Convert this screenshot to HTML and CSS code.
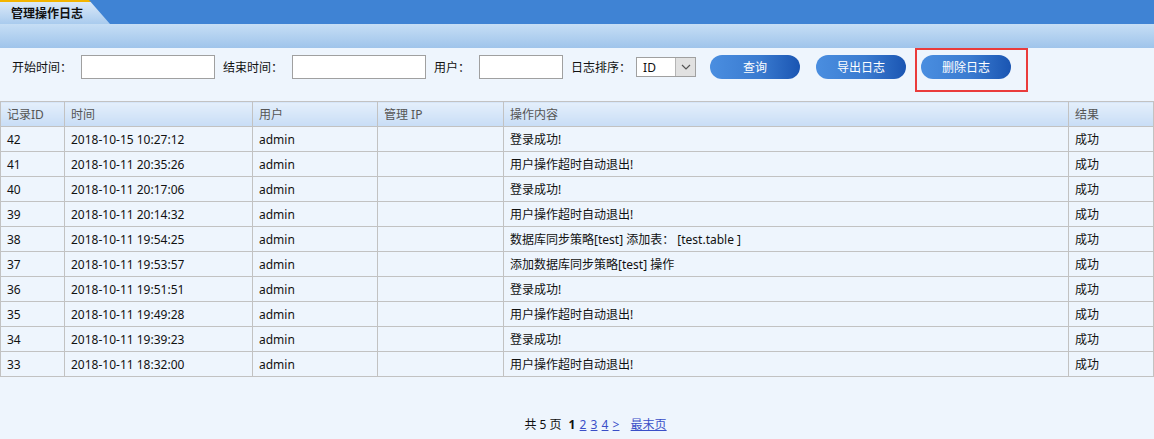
FILE: index.html
```html
<!DOCTYPE html>
<html lang="zh">
<head>
<meta charset="utf-8">
<title>管理操作日志</title>
<link rel="stylesheet" href="styles.css">
</head>
<body>
<div class="topbar">
  <div class="tab"><span>管理操作日志</span></div>
</div>
<div class="band"></div>
<div class="filters">
  <label class="lbl lbl-start">开始时间：</label>
  <input class="txt txt-wide" type="text">
  <label class="lbl">结束时间：</label>
  <input class="txt txt-wide" type="text">
  <label class="lbl">用户：</label>
  <input class="txt txt-user" type="text">
  <label class="lbl">日志排序：</label>
  <div class="sel">
    <span class="sel-val">ID</span>
    <span class="sel-arrow"><svg width="10" height="6" viewBox="0 0 10 6"><path d="M1 1 L5 5 L9 1" fill="none" stroke="#555" stroke-width="1.2"/></svg></span>
  </div>
  <button class="btn btn-query">查询</button>
  <button class="btn btn-export">导出日志</button>
  <div class="hl-wrap">
    <button class="btn btn-del">删除日志</button>
    <div class="hl"></div>
  </div>
</div>
<table class="grid">
  <thead>
    <tr><th class="c-id">记录ID</th><th class="c-time">时间</th><th class="c-user">用户</th><th class="c-ip">管理 IP</th><th class="c-op">操作内容</th><th class="c-res">结果</th></tr>
  </thead>
  <tbody>
    <tr><td>42</td><td>2018-10-15 10:27:12</td><td>admin</td><td></td><td>登录成功!</td><td>成功</td></tr>
    <tr><td>41</td><td>2018-10-11 20:35:26</td><td>admin</td><td></td><td>用户操作超时自动退出!</td><td>成功</td></tr>
    <tr><td>40</td><td>2018-10-11 20:17:06</td><td>admin</td><td></td><td>登录成功!</td><td>成功</td></tr>
    <tr><td>39</td><td>2018-10-11 20:14:32</td><td>admin</td><td></td><td>用户操作超时自动退出!</td><td>成功</td></tr>
    <tr><td>38</td><td>2018-10-11 19:54:25</td><td>admin</td><td></td><td>数据库同步策略[test] 添加表：&nbsp;[test.table ]</td><td>成功</td></tr>
    <tr><td>37</td><td>2018-10-11 19:53:57</td><td>admin</td><td></td><td>添加数据库同步策略[test] 操作</td><td>成功</td></tr>
    <tr><td>36</td><td>2018-10-11 19:51:51</td><td>admin</td><td></td><td>登录成功!</td><td>成功</td></tr>
    <tr><td>35</td><td>2018-10-11 19:49:28</td><td>admin</td><td></td><td>用户操作超时自动退出!</td><td>成功</td></tr>
    <tr><td>34</td><td>2018-10-11 19:39:23</td><td>admin</td><td></td><td>登录成功!</td><td>成功</td></tr>
    <tr><td>33</td><td>2018-10-11 18:32:00</td><td>admin</td><td></td><td>用户操作超时自动退出!</td><td>成功</td></tr>
  </tbody>
</table>
<div class="pager">
  <span>共 5 页</span>
  <b class="cur">1</b>
  <a href="#">2</a>
  <a href="#">3</a>
  <a href="#">4</a>
  <a href="#" class="nxt">&gt;</a>
  <a href="#" class="last">最末页</a>
</div>
</body>
</html>
```
FILE: styles.css
```css
html, body {
  margin: 0;
  padding: 0;
  background: #eef5fd;
  font-family: "Noto Sans", "Noto Sans CJK SC", sans-serif;
  font-size: 12px;
  color: #111;
}
.topbar {
  height: 24px;
  background: #3f83d4;
}
.tab {
  width: 110px;
  height: 24px;
  background: linear-gradient(#dbe9f8, #a9cbee);
  clip-path: polygon(0 0, 89px 0, 110px 24px, 0 24px);
  box-sizing: border-box;
  border-top: 2px solid #f3b400;
  display: flex;
  align-items: center;
}
.tab span {
  padding-left: 11px;
  font-weight: bold;
  font-size: 12px;
  color: #111;
}
.band {
  height: 24px;
  background: linear-gradient(#c6def5, #9fc4eb);
}
.filters {
  display: flex;
  align-items: center;
  height: 24px;
  padding: 7px 0 22px 0;
}
.lbl {
  margin-left: 8px;
  white-space: nowrap;
  color: #111;
}
.lbl-start { margin-left: 12px; }
.txt {
  height: 24px;
  box-sizing: border-box;
  border: 1px solid #a0a0a0;
  background: #fff;
  margin: 0 0 0 9px;
  padding: 0 3px;
}
.txt-wide { width: 134px; }
.txt-user { width: 84px; }
.sel {
  margin-left: 5px;
  width: 60px;
  height: 20px;
  box-sizing: border-box;
  border: 1px solid #a0a0a0;
  background: #fff;
  display: flex;
  align-items: stretch;
}
.sel-val {
  flex: 1;
  padding-left: 6px;
  display: flex;
  align-items: center;
  font-size: 12px;
}
.sel-arrow {
  width: 19px;
  background: #e1e1e1;
  border-left: 1px solid #b5b5b5;
  display: flex;
  align-items: center;
  justify-content: center;
}
.btn {
  width: 90px;
  height: 24px;
  border: none;
  border-radius: 12px;
  background: linear-gradient(90deg, #4a8ee0, #3a7bd0 55%, #1a55b2);
  color: #fff;
  font-family: inherit;
  font-size: 12px;
  padding: 0;
  margin: 0;
  cursor: pointer;
}
.btn-query { margin-left: 14px; }
.btn-export { margin-left: 16px; }
.hl-wrap {
  position: relative;
  margin-left: 15px;
  display: flex;
}
.hl {
  position: absolute;
  left: -6px;
  top: -7px;
  width: 113px;
  height: 44px;
  box-sizing: border-box;
  border: 2px solid #ea3c3c;
}
.grid {
  width: 100%;
  border-collapse: collapse;
  table-layout: fixed;
}
.grid th, .grid td {
  box-sizing: border-box;
  border: 1px solid #c2c2c2;
  height: 25px;
  padding: 0 0 0 6px;
  text-align: left;
  white-space: nowrap;
}
.grid th {
  font-weight: normal;
  color: #555;
  background: linear-gradient(#e4effb, #c8ddf6);
}
.grid td { color: #111; }
.c-id { width: 64px; }
.c-time { width: 188px; }
.c-user { width: 125px; }
.c-ip { width: 126px; }
.c-op { width: 565px; }
.pager {
  margin-top: 38px;
  text-align: center;
  padding-left: 38px;
  color: #111;
}
.pager span { margin-right: 4px; }
.pager .cur { font-weight: bold; margin-right: 1px; }
.pager a {
  color: #3a4fc8;
  text-decoration: underline;
  margin-right: 1px;
}
.pager .nxt { margin-right: 8px; }
```
